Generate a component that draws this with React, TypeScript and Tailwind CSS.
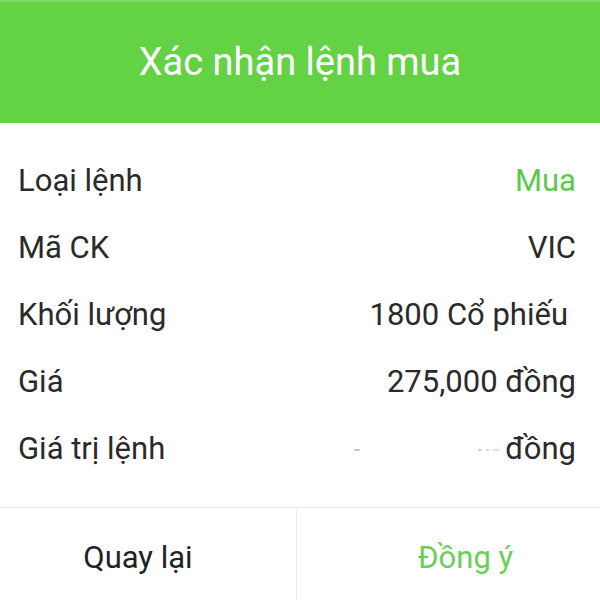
const rows: { label: string; value: string; green?: boolean; masked?: boolean; extraRight?: boolean }[] = [
  { label: "Loại lệnh", value: "Mua", green: true },
  { label: "Mã CK", value: "VIC" },
  { label: "Khối lượng", value: "1800 Cổ phiếu", extraRight: true },
  { label: "Giá", value: "275,000 đồng" },
  { label: "Giá trị lệnh", value: "đồng", masked: true },
];

export default function App() {
  return (
    <div className="w-[600px] h-[600px] bg-white flex flex-col font-['Roboto','Noto_Sans',sans-serif] overflow-hidden">
      {/* tiêu đề */}
      <div className="h-[123px] bg-[#63d245] border-t-2 border-[#7ddc66] flex items-center justify-center shrink-0">
        <span className="text-[38px] text-white">Xác nhận lệnh mua</span>
      </div>

      {/* chi tiết lệnh */}
      <div className="pt-[25px] pb-[24px] pl-[18px] pr-[24px] flex flex-col">
        {rows.map((r) => (
          <div key={r.label} className="h-[67px] flex items-center justify-between text-[31px] text-[#2a2a2a]">
            <span>{r.label}</span>
            {r.masked ? (
              <span className="flex items-center">
                <span className="w-[6px] h-[2px] bg-[#c8c8c8] mr-[118px]" />
                <span className="flex items-center gap-[4px] mr-[6px]">
                  <span className="w-[4px] h-[2px] bg-[#cfcfcf]" />
                  <span className="w-[3px] h-[2px] bg-[#d8d8d8]" />
                  <span className="w-[6px] h-[2px] bg-[#e0e0e0]" />
                </span>
                <span>{r.value}</span>
              </span>
            ) : (
              <span className={(r.green ? "text-[#5cc94a]" : "") + (r.extraRight ? " mr-[8px]" : "")}>{r.value}</span>
            )}
          </div>
        ))}
      </div>

      {/* nút */}
      <div className="flex-1 flex border-t border-[#ececec]">
        <button className="w-[297px] flex items-center justify-center text-[31px] text-[#222] border-r border-[#ececec] pt-[8px] pr-[20px]">
          Quay lại
        </button>
        <button className="flex-1 flex items-center justify-center text-[31px] text-[#6bcf57] pt-[8px] pl-[34px]">
          Đồng ý
        </button>
      </div>
    </div>
  );
}
